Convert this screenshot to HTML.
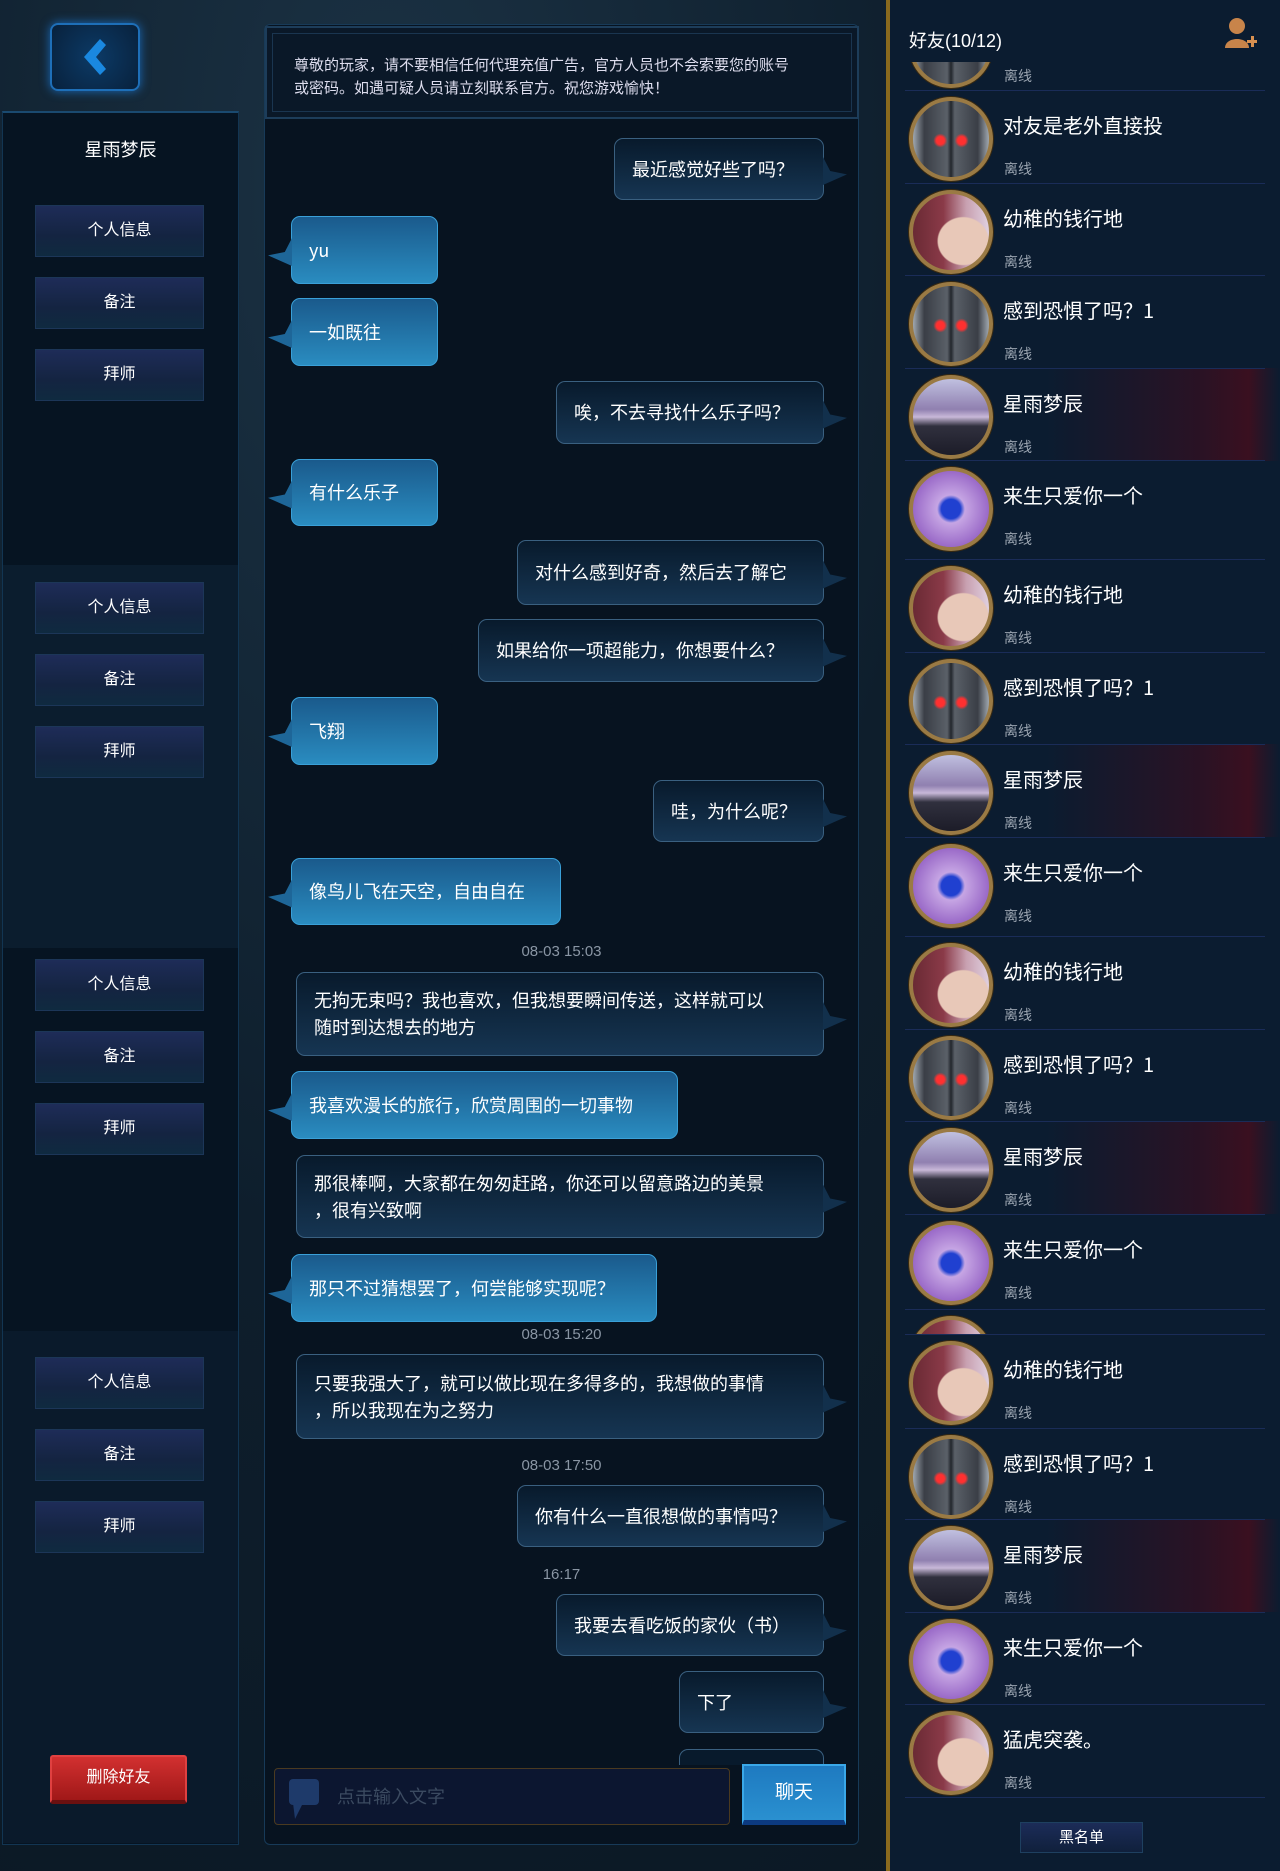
<!DOCTYPE html>
<html><head><meta charset="utf-8">
<style>
*{margin:0;padding:0;box-sizing:border-box}
body{width:1280px;height:1871px;overflow:hidden;position:relative;background:#0c1a27;font-family:"Liberation Sans","Noto Sans CJK SC",sans-serif;color:#fff}
.abs{position:absolute}
.bg{left:0;top:0;width:1280px;height:1871px;background:radial-gradient(ellipse at 30% 10%,#1b3244 0,#0e1e2c 45%,#0a1621 100%)}
.back{left:50px;top:23px;width:90px;height:68px;border:2px solid #1e6fb8;border-radius:8px;background:radial-gradient(circle at 50% 50%,#0c3a66,#08213c);box-shadow:0 0 10px #1a6ab8}
.lp{left:2px;top:111px;width:237px;height:1734px;background:#061422;border:1px solid #123552;border-top:2px solid #1a4a70}
.sec{left:3px;width:235px;background:#0b1d2e}
.btn{left:35px;width:169px;height:52px;background:linear-gradient(#1e2c58,#142441 60%,#0f2a40);border:1px solid #1c3658;font-size:16px;text-align:center;line-height:50px}
.del{left:50px;top:1755px;width:137px;height:49px;background:linear-gradient(#d23030,#a01818);border:2px solid #e04040;border-bottom:4px solid #6a1010;border-radius:3px;font-size:16px;text-align:center;line-height:42px}
.cp{left:264px;top:24px;width:595px;height:1821px;background:#071320;border:1px solid #173a58;border-radius:6px}
.notice{left:265px;top:26px;width:594px;height:93px;border:2px solid #1d3d5a;background:#0a1828;font-size:15px;line-height:23px;color:#dde;padding:25px 10px 0 27px;white-space:nowrap;font-family:"Noto Sans CJK SC",sans-serif;box-shadow:inset 0 0 0 5px #0a1828,inset 0 0 0 6px #1a3550}
.b{font-size:18px;line-height:27px;padding:0 17px;border-radius:9px;display:flex;align-items:center;white-space:nowrap;font-family:"Noto Sans CJK SC","Liberation Sans",sans-serif}
.r{background:linear-gradient(#081a2c,#163552);border:1.5px solid #3a6080}
.l{background:linear-gradient(#1a5a8c,#2a8cc0);border:1.5px solid #3aa0d8}
.r:after{content:"";position:absolute;right:-24px;top:calc(50% - 12px);width:24px;height:28px;background:#12304c;clip-path:polygon(0 0,30% 50%,100% 62%,0 100%)}
.l:before{content:"";position:absolute;left:-24px;top:calc(50% - 12px);width:24px;height:28px;background:#1e6698;clip-path:polygon(100% 0,70% 50%,0 62%,100% 100%)}
.b.two{white-space:nowrap}
.t{font-size:15px;color:#8a96a4;width:595px;left:264px;text-align:center}
.inp{left:274px;top:1768px;width:456px;height:57px;border:1.5px solid #4a3a20;border-radius:4px;background:#0c1630;font-size:18px;color:#3b4a60;padding:0 0 0 62px;line-height:54px;font-family:"Noto Sans CJK SC",sans-serif}
.inp:before{content:"";position:absolute;left:14px;top:10px;width:30px;height:26px;background:#1e3a6a;border-radius:4px}
.inp:after{content:"";position:absolute;left:18px;top:34px;width:10px;height:16px;background:#1e3a6a;clip-path:polygon(0 0,100% 0,20% 100%)}
.chat{left:742px;top:1764px;width:104px;height:61px;background:linear-gradient(#1e7ac0,#2a90d0);border:2px solid #3aa8e8;border-bottom:5px solid #0c3a80;font-size:19px;text-align:center;line-height:54px}
.gold{left:886px;top:0;width:4px;height:1871px;background:#8a6a1e}
.rp{left:890px;top:0;width:390px;height:1871px;background:#0b1c30}
.row{position:absolute;left:890px;width:390px;height:93px}
.row:before{content:"";position:absolute;left:15px;right:15px;top:0;height:1px;background:#1a2c58}
.red{background:linear-gradient(90deg,rgba(0,0,0,0) 0,rgba(0,0,0,0) 40%,#2a1224 80%,#3a1020 92%,rgba(0,0,0,0) 100%)}
.av{position:absolute;left:19px;top:7px;width:84px;height:84px;border-radius:50%;border:4px solid #9a7a44;box-shadow:0 0 0 1px #3a2a10}
.k{background:radial-gradient(circle at 36% 52%,#ff3030 0 4px,transparent 7px),radial-gradient(circle at 64% 52%,#ff3030 0 4px,transparent 7px),linear-gradient(90deg,#a0a8b0 0,#3a3e46 15%,#5a6068 45%,#22262c 50%,#5a6068 55%,#3a3e46 85%,#a0a8b0 100%)}
.g{background:radial-gradient(ellipse at 66% 62%,#e8c8b8 0 35%,transparent 37%),linear-gradient(90deg,#6a2a34,#8a3a48 40%,#c8a0b0 70%,#e0d0e0)}
.m{background:linear-gradient(#c0c0e0,#9080b0 40%,#c8b8d8 50%,#30303e 62%,#1c1c28)}
.p{background:radial-gradient(ellipse at 50% 50%,#2040d0 0 18%,transparent 26%),radial-gradient(#e0c8f4,#9a6ac8 70%,#6a4a98)}
.nm{position:absolute;left:113px;top:23px;font-size:20px;line-height:24px;white-space:nowrap;font-family:"Noto Sans CJK SC","Liberation Sans",sans-serif}
.of{position:absolute;left:114px;top:70px;font-size:14px;line-height:18px;color:#9aa4b0}
.hdr{left:890px;top:0;width:390px;height:62px;background:#0b1c30;z-index:5}
.bl{left:1020px;top:1822px;width:123px;height:31px;background:linear-gradient(#1c2c58,#10203c);border:1px solid #1e4060;font-size:15px;text-align:center;line-height:29px}
</style></head><body>
<div class="abs bg"></div>
<div class="abs back"><svg width="86" height="64" viewBox="0 0 86 64"><path d="M48 14 L32 32 L48 50 L54 44 L44 32 L54 20 Z" fill="#1a88e0"/></svg></div>

<div class="abs lp"></div>
<div class="abs sec" style="top:565px;height:383px"></div>
<div class="abs sec" style="top:1331px;height:512px;background:#0a1a2b"></div>
<div class="abs" style="left:2px;top:136px;width:237px;text-align:center;font-size:18px">星雨梦辰</div>
<div class="abs btn" style="top:205px">个人信息</div>
<div class="abs btn" style="top:277px">备注</div>
<div class="abs btn" style="top:349px">拜师</div>
<div class="abs btn" style="top:582px">个人信息</div>
<div class="abs btn" style="top:654px">备注</div>
<div class="abs btn" style="top:726px">拜师</div>
<div class="abs btn" style="top:959px">个人信息</div>
<div class="abs btn" style="top:1031px">备注</div>
<div class="abs btn" style="top:1103px">拜师</div>
<div class="abs btn" style="top:1357px">个人信息</div>
<div class="abs btn" style="top:1429px">备注</div>
<div class="abs btn" style="top:1501px">拜师</div>
<div class="abs del">删除好友</div>

<div class="abs cp"></div>
<div class="abs notice">尊敬的玩家，请不要相信任何代理充值广告，官方人员也不会索要您的账号<br>或密码。如遇可疑人员请立刻联系官方。祝您游戏愉快！</div>

<div class="abs b r" style="left:614px;top:138px;width:210px;height:62px">最近感觉好些了吗？</div>
<div class="abs b l" style="left:291px;top:216px;width:147px;height:68px">yu</div>
<div class="abs b l" style="left:291px;top:298px;width:147px;height:68px">一如既往</div>
<div class="abs b r" style="left:556px;top:381px;width:268px;height:63px">唉，不去寻找什么乐子吗？</div>
<div class="abs b l" style="left:291px;top:459px;width:147px;height:67px">有什么乐子</div>
<div class="abs b r" style="left:517px;top:540px;width:307px;height:65px">对什么感到好奇，然后去了解它</div>
<div class="abs b r" style="left:478px;top:619px;width:346px;height:63px">如果给你一项超能力，你想要什么？</div>
<div class="abs b l" style="left:291px;top:697px;width:147px;height:68px">飞翔</div>
<div class="abs b r" style="left:653px;top:780px;width:171px;height:62px">哇，为什么呢？</div>
<div class="abs b l" style="left:291px;top:858px;width:270px;height:67px">像鸟儿飞在天空，自由自在</div>
<div class="abs t" style="top:943px">08-03 15:03</div>
<div class="abs b r two" style="left:296px;top:972px;width:528px;height:84px">无拘无束吗？我也喜欢，但我想要瞬间传送，这样就可以<br>随时到达想去的地方</div>
<div class="abs b l" style="left:291px;top:1071px;width:387px;height:68px">我喜欢漫长的旅行，欣赏周围的一切事物</div>
<div class="abs b r two" style="left:296px;top:1155px;width:528px;height:83px">那很棒啊，大家都在匆匆赶路，你还可以留意路边的美景<br>，很有兴致啊</div>
<div class="abs b l" style="left:291px;top:1254px;width:366px;height:68px">那只不过猜想罢了，何尝能够实现呢？</div>
<div class="abs t" style="top:1326px">08-03 15:20</div>
<div class="abs b r two" style="left:296px;top:1354px;width:528px;height:85px">只要我强大了，就可以做比现在多得多的，我想做的事情<br>，所以我现在为之努力</div>
<div class="abs t" style="top:1457px">08-03 17:50</div>
<div class="abs b r" style="left:517px;top:1485px;width:307px;height:62px">你有什么一直很想做的事情吗？</div>
<div class="abs t" style="top:1566px">16:17</div>
<div class="abs b r" style="left:556px;top:1594px;width:268px;height:62px">我要去看吃饭的家伙（书）</div>
<div class="abs b r" style="left:679px;top:1671px;width:145px;height:62px">下了</div>
<div class="abs" style="left:679px;top:1749px;width:145px;height:16px;border:1.5px solid #3a6080;border-bottom:none;border-radius:9px 9px 0 0;background:#081a2c"></div>
<div class="abs inp">点击输入文字</div>
<div class="abs chat">聊天</div>

<div class="abs gold"></div>
<div class="abs rp"></div>

<div class="row" style="top:-3px"><div class="av k"></div><div class="of">离线</div></div>
<div class="row" style="top:90px"><div class="av k"></div><div class="nm">对友是老外直接投</div><div class="of">离线</div></div>
<div class="row" style="top:183px"><div class="av g"></div><div class="nm">幼稚的钱行地</div><div class="of">离线</div></div>
<div class="row" style="top:275px"><div class="av k"></div><div class="nm">感到恐惧了吗？1</div><div class="of">离线</div></div>
<div class="row red" style="top:368px"><div class="av m"></div><div class="nm">星雨梦辰</div><div class="of">离线</div></div>
<div class="row" style="top:460px"><div class="av p"></div><div class="nm">来生只爱你一个</div><div class="of">离线</div></div>
<div class="row" style="top:559px"><div class="av g"></div><div class="nm">幼稚的钱行地</div><div class="of">离线</div></div>
<div class="row" style="top:652px"><div class="av k"></div><div class="nm">感到恐惧了吗？1</div><div class="of">离线</div></div>
<div class="row red" style="top:744px"><div class="av m"></div><div class="nm">星雨梦辰</div><div class="of">离线</div></div>
<div class="row" style="top:837px"><div class="av p"></div><div class="nm">来生只爱你一个</div><div class="of">离线</div></div>
<div class="row" style="top:936px"><div class="av g"></div><div class="nm">幼稚的钱行地</div><div class="of">离线</div></div>
<div class="row" style="top:1029px"><div class="av k"></div><div class="nm">感到恐惧了吗？1</div><div class="of">离线</div></div>
<div class="row red" style="top:1121px"><div class="av m"></div><div class="nm">星雨梦辰</div><div class="of">离线</div></div>
<div class="row" style="top:1214px"><div class="av p"></div><div class="nm">来生只爱你一个</div><div class="of">离线</div></div>
<div class="row" style="top:1309px"><div class="av g"></div></div>
<div class="row" style="top:1334px;background:#0b1c30"><div class="av g"></div><div class="nm">幼稚的钱行地</div><div class="of">离线</div></div>
<div class="row" style="top:1428px"><div class="av k"></div><div class="nm">感到恐惧了吗？1</div><div class="of">离线</div></div>
<div class="row red" style="top:1519px"><div class="av m"></div><div class="nm">星雨梦辰</div><div class="of">离线</div></div>
<div class="row" style="top:1612px"><div class="av p"></div><div class="nm">来生只爱你一个</div><div class="of">离线</div></div>
<div class="row" style="top:1704px"><div class="av g"></div><div class="nm">猛虎突袭。</div><div class="of">离线</div></div>
<div class="abs" style="left:905px;top:1797px;width:360px;height:1px;background:#1a2c58"></div>

<div class="abs hdr"><div class="abs" style="left:19px;top:27px;font-size:18px">好友(10/12)</div>
<svg class="abs" style="left:333px;top:16px" width="34" height="36" viewBox="0 0 34 36"><circle cx="14" cy="10" r="8" fill="#c8844a"/><path d="M2 32 C2 20 26 20 26 32 Z" fill="#c8844a"/><path d="M24 24h4v-4h3v4h4v3h-4v4h-3v-4h-4z" fill="#d89050"/></svg></div>
<div class="abs bl">黑名单</div>
</body></html>
